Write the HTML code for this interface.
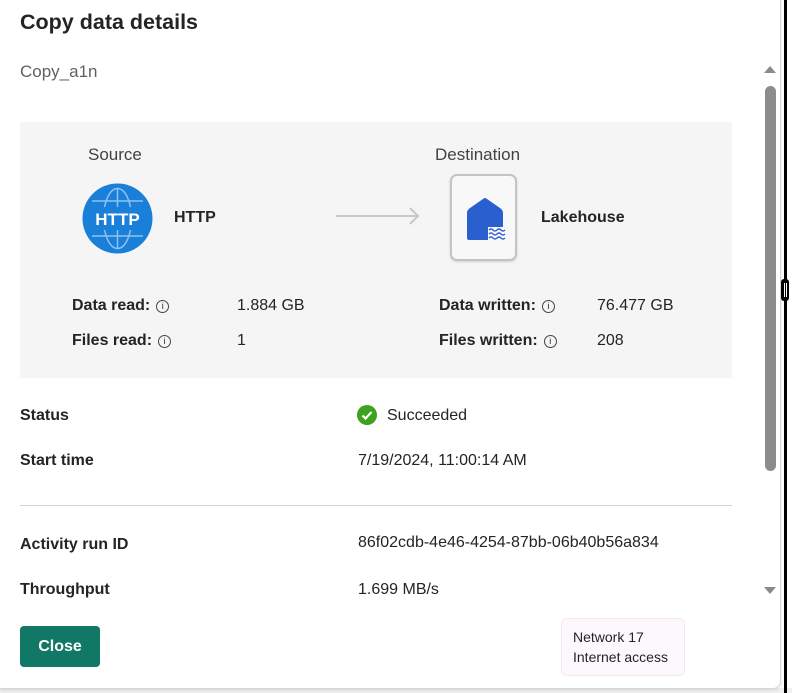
<!DOCTYPE html>
<html><head><meta charset="utf-8"><style>
body{margin:0;width:792px;height:693px;background:#fff;font-family:"Liberation Sans",sans-serif;color:#242424;position:relative;overflow:hidden}
.a{position:absolute;white-space:nowrap}
.b{font-weight:bold;font-size:16px}
.r{font-size:16px}
.i{display:inline-block;width:11px;height:11px;border:1px solid #444;border-radius:50%;font-size:9px;line-height:11px;text-align:center;font-weight:normal;vertical-align:1px;margin-left:6px}
</style></head><body>
<div class="a" style="left:0;top:688px;width:792px;height:5px;background:#f0f0f0"></div>
<div class="a" style="left:0;top:0;width:780px;height:688px;background:#fff;border-right:1px solid #d6d6d6;border-bottom:1px solid #d6d6d6;border-bottom-right-radius:8px;box-shadow:0 1px 3px rgba(0,0,0,.12)"></div>
<div class="a" style="left:784px;top:0;width:3px;height:693px;background:#000"></div>
<div class="a" style="left:781px;top:279px;width:8px;height:22px;background:#000;border-radius:3px"></div>
<div class="a" style="left:784px;top:283px;width:1px;height:14px;background:#fff"></div>
<div class="a" style="left:786px;top:283px;width:1px;height:14px;background:#fff"></div>
<div class="a" style="left:20px;top:10px;font-size:21.5px;font-weight:bold;color:#242424">Copy data details</div>
<div class="a r" style="left:20px;top:62px;color:#616161;font-size:17px">Copy_a1n</div>
<div class="a" style="left:764px;top:66px;width:0;height:0;border-left:6px solid transparent;border-right:6px solid transparent;border-bottom:7px solid #8a8a8a"></div>
<div class="a" style="left:765px;top:86px;width:11px;height:385px;background:#8c8c8a;border-radius:6px"></div>
<div class="a" style="left:764px;top:587px;width:0;height:0;border-left:6px solid transparent;border-right:6px solid transparent;border-top:7px solid #8a8a8a"></div>
<div class="a" style="left:20px;top:122px;width:712px;height:256px;background:#f5f5f5"></div>
<div class="a" style="left:88px;top:145px;font-size:17px;color:#424242">Source</div>
<div class="a" style="left:435px;top:145px;font-size:17px;color:#424242">Destination</div>
<svg class="a" style="left:82px;top:183px" width="71" height="71" viewBox="0 0 71 71">
<circle cx="35.5" cy="35.5" r="35" fill="#1a7fd8"/>
<g fill="none" stroke="#8cc3f0" stroke-width="1.5"><ellipse cx="35.5" cy="35.5" rx="14" ry="30"/><path d="M10 18h51M10 53h51M35.5 5v61"/></g>
<rect x="7" y="24" width="57" height="23" fill="#1a7fd8"/>
<text x="35.5" y="42" text-anchor="middle" font-family="Liberation Sans" font-weight="bold" font-size="17" fill="#fff">HTTP</text></svg>
<div class="a b" style="left:174px;top:209px">HTTP</div>
<svg class="a" style="left:335px;top:205px" width="86" height="22"><path d="M1 11h83M75 3l8 8-8 8" fill="none" stroke="#c8c8c8" stroke-width="2"/></svg>
<div class="a" style="left:450px;top:174px;width:67px;height:87px;background:#f8f8f8;border:2px solid #c4c4c4;border-radius:7px;box-sizing:border-box;box-shadow:0 1px 2px rgba(0,0,0,.15)"></div>
<svg class="a" style="left:464px;top:197px" width="46" height="46" viewBox="0 0 46 46"><path d="M3 16Q3 13 6 11L19 2Q21 0 23 2L36 11Q39 13 39 16V41Q39 43 37 43H5Q3 43 3 41z" fill="#2a5fcf"/><rect x="24" y="30" width="22" height="16" fill="#f8f8f8"/><path d="M25 33q2-2 4 0t4 0 4 0 4 0M25 37q2-2 4 0t4 0 4 0 4 0M25 41q2-2 4 0t4 0 4 0 4 0" stroke="#2a5fcf" stroke-width="1.3" fill="none"/></svg>
<div class="a b" style="left:541px;top:209px">Lakehouse</div>
<div class="a b" style="left:72px;top:297px">Data read:<span class="i">i</span></div>
<div class="a r" style="left:237px;top:297px">1.884 GB</div>
<div class="a b" style="left:72px;top:332px">Files read:<span class="i">i</span></div>
<div class="a r" style="left:237px;top:332px">1</div>
<div class="a b" style="left:439px;top:297px">Data written:<span class="i">i</span></div>
<div class="a r" style="left:597px;top:297px">76.477 GB</div>
<div class="a b" style="left:439px;top:332px">Files written:<span class="i">i</span></div>
<div class="a r" style="left:597px;top:332px">208</div>
<div class="a b" style="left:20px;top:407px">Status</div>
<svg class="a" style="left:357px;top:405px" width="20" height="20"><circle cx="10" cy="10" r="10" fill="#3ea21e"/><path d="M5.5 10.5l3 3 6-6.5" stroke="#fff" stroke-width="2.2" fill="none"/></svg>
<div class="a r" style="left:387px;top:407px">Succeeded</div>
<div class="a b" style="left:20px;top:452px">Start time</div>
<div class="a r" style="left:358px;top:452px">7/19/2024, 11:00:14 AM</div>
<div class="a" style="left:20px;top:505px;width:712px;height:1px;background:#d6d6d6"></div>
<div class="a b" style="left:20px;top:536px">Activity run ID</div>
<div class="a r" style="left:358px;top:534px">86f02cdb-4e46-4254-87bb-06b40b56a834</div>
<div class="a b" style="left:20px;top:581px">Throughput</div>
<div class="a r" style="left:358px;top:581px">1.699 MB/s</div>
<div class="a" style="left:20px;top:626px;width:80px;height:41px;background:#117865;border-radius:4px;color:#fff;font-weight:bold;font-size:16px;line-height:41px;text-align:center">Close</div>
<div class="a" style="left:561px;top:618px;width:124px;height:58px;background:#fdf8fc;border:1px solid #f3e8f0;border-radius:6px;box-sizing:border-box;font-size:14px;line-height:20px;padding:8px 0 0 11px;color:#242424">Network 17<br>Internet access</div>
</body></html>
